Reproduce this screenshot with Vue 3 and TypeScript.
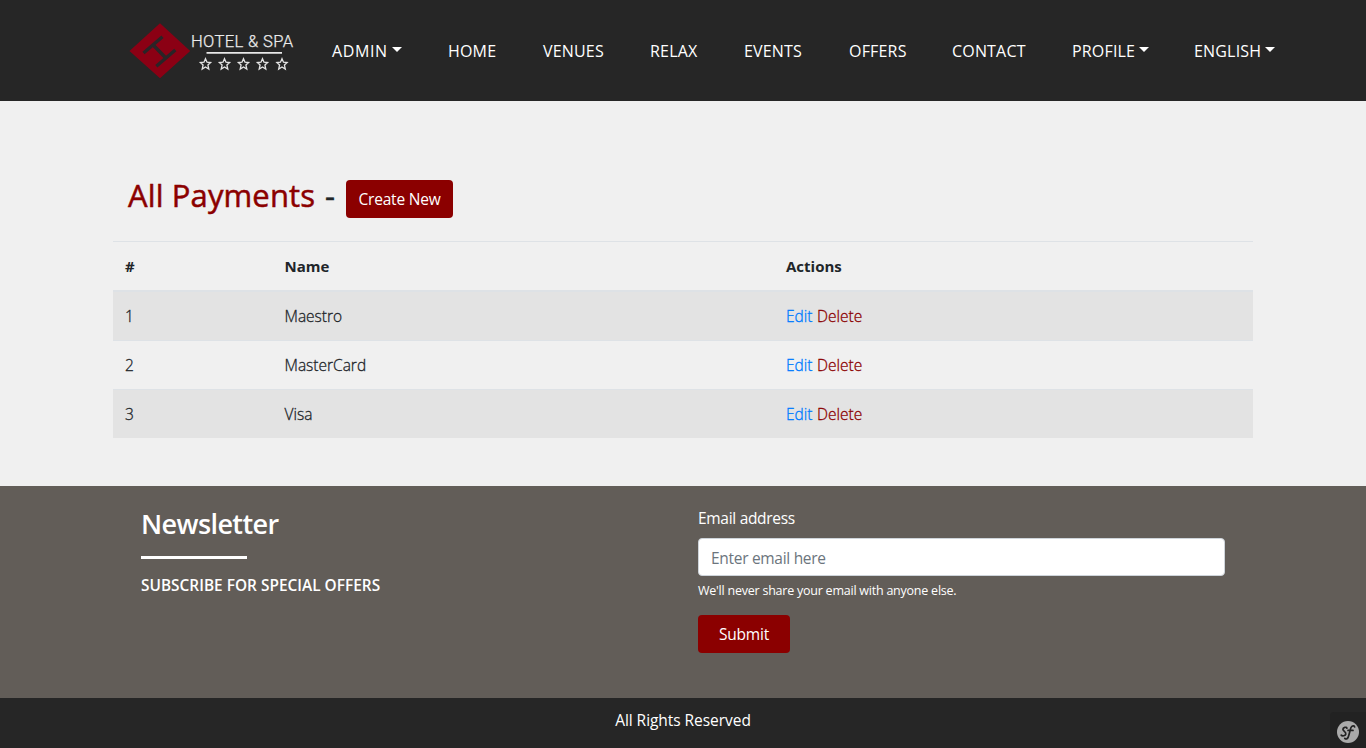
<script setup lang="ts">
interface NavItem {
  label: string
  key: string
  dropdown?: boolean
}

interface Payment {
  id: number
  name: string
}

const navItems: NavItem[] = [
  { label: 'ADMIN', key: 'admin', dropdown: true },
  { label: 'HOME', key: 'home' },
  { label: 'VENUES', key: 'venues' },
  { label: 'RELAX', key: 'relax' },
  { label: 'EVENTS', key: 'events' },
  { label: 'OFFERS', key: 'offers' },
  { label: 'CONTACT', key: 'contact' },
  { label: 'PROFILE', key: 'profile', dropdown: true },
  { label: 'ENGLISH', key: 'english', dropdown: true },
]

const payments: Payment[] = [
  { id: 1, name: 'Maestro' },
  { id: 2, name: 'MasterCard' },
  { id: 3, name: 'Visa' },
]

const stars: number[] = [75.5, 94.5, 113.5, 132.5, 152]
</script>

<template>
  <div class="page">
    <header class="header">
      <a class="brand" aria-label="Hotel &amp; Spa">
        <svg width="170" height="60" viewBox="0 0 170 60">
          <path d="M30 3.2 60.2 31 30 58.3-.5 31Z" fill="#8b0014" />
          <path
            d="M13.5 33 32.5 16.8M26.3 46.3 45.3 30M23.2 25 35.8 38"
            fill="none"
            stroke="#2a2427"
            stroke-width="3.4"
          />
          <text x="61" y="26.6" class="brand-text" textLength="102">HOTEL &amp; SPA</text>
          <path d="M76.5 32.8H152" stroke="#e8e8e8" stroke-width="1.8" />
          <path
            v-for="x in stars"
            :key="x"
            :transform="`translate(${x} 44)`"
            d="M0-5.3 1.5-1.8 5.1-1.5 2.4 1 3.3 5 0 2.9-3.3 5-2.4 1-5.1-1.5-1.5-1.8Z"
            fill="none"
            stroke="#e4e4e4"
            stroke-width="1.3"
          />
        </svg>
      </a>
      <nav class="nav">
        <a v-for="item in navItems" :key="item.key" class="nav-link" :class="item.key">
          <span>{{ item.label }}</span><i v-if="item.dropdown" class="caret"></i>
        </a>
      </nav>
    </header>

    <main class="main">
      <h2 class="title">
        <span class="title-name">All Payments</span>
        <span class="dash">-</span>
        <a class="btn create"><span>Create New</span></a>
      </h2>
      <table class="table">
        <thead>
          <tr>
            <th class="col-id">#</th>
            <th class="col-name">Name</th>
            <th>Actions</th>
          </tr>
        </thead>
        <tbody>
          <tr v-for="p in payments" :key="p.id">
            <td>{{ p.id }}</td>
            <td>{{ p.name }}</td>
            <td><a class="edit">Edit</a><a class="delete">Delete</a></td>
          </tr>
        </tbody>
      </table>
    </main>

    <section class="newsletter">
      <div class="intro">
        <h3>Newsletter</h3>
        <div class="rule"></div>
        <p>SUBSCRIBE FOR SPECIAL OFFERS</p>
      </div>
      <form class="form" @submit.prevent>
        <label for="email">Email address</label>
        <input id="email" type="email" placeholder="Enter email here" />
        <small>We'll never share your email with anyone else.</small>
        <button class="btn submit" type="submit">Submit</button>
      </form>
    </section>

    <footer class="footer">All Rights Reserved</footer>

    <div class="toolbar">
      <svg width="24" height="24" viewBox="0 0 24 24">
        <circle cx="12" cy="12" r="11" fill="#aaa" />
        <path
          d="M10.9 8.2C10.5 6.5 7 7.2 6.9 9.3c-.1 1.9 3.3 2.6 2.9 4.7-.3 1.8-3.5 2.5-4.6 1.1M18.6 7c-.2-1.8-2.7-1.6-3.6.5-1 2.3-1.6 6.6-2.8 9.6-.7 1.8-2.3 2.5-3.4 1.3M12 10.4h5"
          fill="none"
          stroke="#222"
          stroke-width="1.7"
          stroke-linecap="round"
        />
      </svg>
    </div>
  </div>
</template>

<style>
body {
  margin: 0;
  background: #f0f0f0;
  overflow: hidden;
}
</style>

<style scoped>
* {
  box-sizing: border-box;
}
.page {
  height: 748px;
  display: flex;
  flex-direction: column;
  font: 400 15.5px/24px 'Segoe UI', 'Open Sans', 'Noto Sans', sans-serif;
  color: #212529;
  white-space: nowrap;
}
.header {
  flex: 0 0 101px;
  background: #262626;
  display: flex;
  align-items: flex-start;
  padding: 20px 0 0 130px;
}
.brand {
  width: 202px;
  height: 60px;
}
.brand svg {
  display: block;
  overflow: visible;
}
.brand-text {
  font: 300 16.6px 'Roboto', sans-serif;
  fill: #ececec;
  stroke: #ececec;
  stroke-width: 0.25px;
}
.nav {
  display: flex;
  padding-top: 19px;
  color: #fff;
  font-size: 16px;
  letter-spacing: 0.18px;
}
.nav-link {
  display: flex;
}
.caret {
  width: 0;
  height: 0;
  margin: 8px 0 0 4px;
  border: 5px solid transparent;
  border-top-color: #fff;
  border-bottom: 0;
}
.admin {
  width: 116px;
  letter-spacing: 0.6px;
}
.home { width: 95px; }
.venues { width: 107px; }
.relax { width: 94px; }
.events { width: 105px; }
.offers { width: 103px; }
.contact { width: 120px; }
.profile { width: 122px; }
.main {
  flex: 0 0 385px;
  width: 1140px;
  margin: 0 auto;
  padding-top: 76px;
}
.title {
  display: flex;
  margin: 0;
  height: 64px;
  padding-left: 15px;
  font-size: 31px;
  line-height: 37px;
  font-weight: 500;
  -webkit-text-stroke: 0.5px;
}
.title-name {
  width: 197px;
  color: #8b0000;
  letter-spacing: 0.12px;
}
.dash {
  width: 21px;
}
.btn {
  height: 38px;
  border: 0;
  border-radius: 4px;
  background: #8b0000;
  color: #fff;
  font: 400 15.5px/38px 'Segoe UI', 'Open Sans', 'Noto Sans', sans-serif;
  text-align: center;
  padding: 0;
  letter-spacing: -0.2px;
  -webkit-text-stroke: 0;
}
.create {
  width: 107px;
  margin-top: 3px;
}
.table {
  width: 100%;
  table-layout: fixed;
  border-collapse: collapse;
}
.table th,
.table td {
  padding: 12px;
  text-align: left;
  border-top: 1px solid #dee2e6;
}
.table th {
  font-weight: 700;
  font-size: 15px;
  border-bottom: 2px solid #dee2e6;
}
.table td {
  font-weight: 300;
  -webkit-text-stroke: 0.3px;
}
.table tbody tr:nth-child(odd) {
  background: #e3e3e3;
}
.col-id { width: 159.5px; }
.col-name { width: 501.5px; }
.edit {
  display: inline-block;
  width: 31px;
  color: #007bff;
}
.delete {
  color: #8b0000;
}
.newsletter {
  flex: 0 0 212px;
  display: flex;
  background: #625d58;
  color: #fff;
}
.intro {
  width: 698px;
  padding: 21px 0 0 141px;
}
.intro h3 {
  margin: 0;
  font-size: 27px;
  line-height: 34px;
  font-weight: 600;
  letter-spacing: -0.6px;
}
.rule {
  width: 106px;
  height: 3px;
  margin: 15px 0;
  background: #fff;
}
.intro p {
  margin: 0;
  font-size: 15.4px;
  font-weight: 600;
  letter-spacing: 0.02px;
}
.form {
  width: 527px;
  display: flex;
  flex-direction: column;
  align-items: flex-start;
  padding-top: 20px;
}
.form label {
  margin-bottom: 8px;
  letter-spacing: -0.3px;
}
.form input {
  width: 100%;
  height: 38px;
  padding: 7px 12px 5px;
  border: 1px solid #ced4da;
  border-radius: 4px;
  background: #fff;
  font: inherit;
  letter-spacing: -0.3px;
  outline: 0;
}
.form input::placeholder {
  color: #6c757d;
  opacity: 1;
}
.form small {
  margin-top: 5px;
  font-size: 12.5px;
  line-height: 20px;
  letter-spacing: -0.23px;
}
.submit {
  width: 92px;
  margin-top: 14px;
}
.footer {
  flex: 0 0 50px;
  padding-top: 10px;
  background: #262626;
  color: #fff;
  text-align: center;
  letter-spacing: -0.05px;
}
.toolbar {
  position: absolute;
  right: 0;
  bottom: 0;
  width: 36px;
  height: 36px;
  padding: 8px 0 0 6px;
  border-top-left-radius: 4px;
  background: #222;
}
.toolbar svg {
  display: block;
}
</style>
